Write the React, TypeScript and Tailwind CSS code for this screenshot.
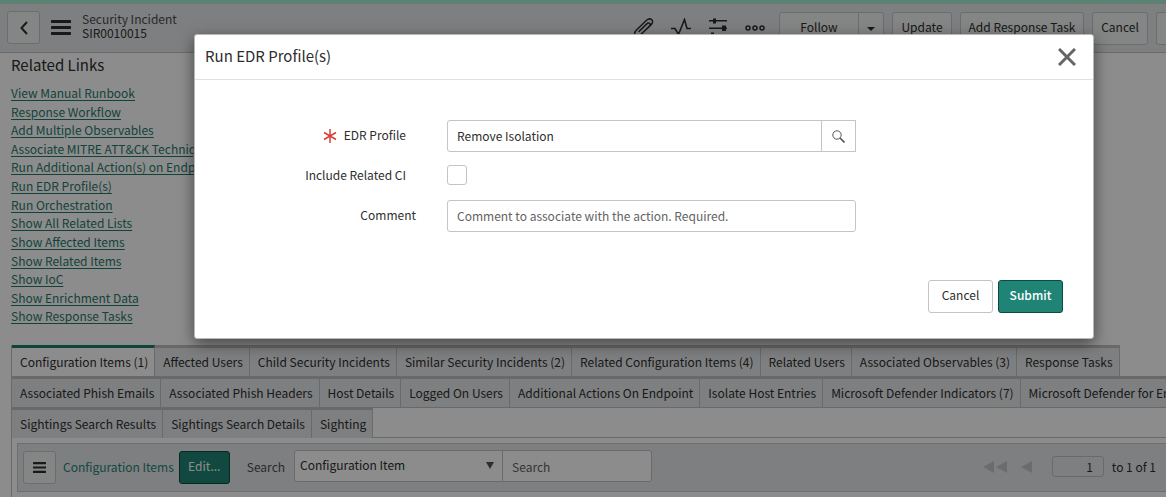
import React, { useState } from "react";

const RELATED_LINKS = [
  "View Manual Runbook",
  "Response Workflow",
  "Add Multiple Observables",
  "Associate MITRE ATT&CK Technique",
  "Run Additional Action(s) on Endpoint",
  "Run EDR Profile(s)",
  "Run Orchestration",
  "Show All Related Lists",
  "Show Affected Items",
  "Show Related Items",
  "Show IoC",
  "Show Enrichment Data",
  "Show Response Tasks",
];

const TAB_ROWS = [
  [
    "Configuration Items (1)",
    "Affected Users",
    "Child Security Incidents",
    "Similar Security Incidents (2)",
    "Related Configuration Items (4)",
    "Related Users",
    "Associated Observables (3)",
    "Response Tasks",
  ],
  [
    "Associated Phish Emails",
    "Associated Phish Headers",
    "Host Details",
    "Logged On Users",
    "Additional Actions On Endpoint",
    "Isolate Host Entries",
    "Microsoft Defender Indicators (7)",
    "Microsoft Defender for Endpoint",
  ],
  ["Sightings Search Results", "Sightings Search Details", "Sighting"],
];

interface HeaderButtonProps {
  className?: string;
  label?: string;
  children?: React.ReactNode;
}

const HeaderButton: React.FC<HeaderButtonProps> = ({ className = "", label, children }) => (
  <button
    aria-label={label}
    className={`h-[33px] border border-[#c4c6c8] bg-[#f0f2f2] pb-[3px] text-[#2e2e2e] ${className}`}
  >
    {children}
  </button>
);

/**
 * Record header with the form actions
 */
const FormHeader: React.FC = () => (
  <header className="flex h-[49px] items-start overflow-hidden border-b border-[#c0c2c6] bg-[#e6e8ea] pl-[7px] pt-[7px]">
    <button
      aria-label="Back"
      className="flex h-[33px] w-[33px] shrink-0 items-center justify-center rounded-[3px] border border-[#c4c6c8] bg-[#f0f2f2]"
    >
      <BackIcon />
    </button>
    <button aria-label="Additional actions" className="ml-[11px] mt-[9px] shrink-0">
      <MenuIcon className="h-[15px] w-5" />
    </button>
    <div className="ml-[11px] mt-px shrink-0 leading-[14px]">
      <div className="text-[#4a4d50]">Security Incident</div>
      <div className="text-[#2e2e2e]">SIR0010015</div>
    </div>
    <div className="ml-auto mt-px flex shrink-0 items-start">
      <button aria-label="Attachments" className="mt-[6px]">
        <PaperclipIcon />
      </button>
      <button aria-label="Activity" className="ml-[17px] mt-[6px]">
        <ActivityIcon />
      </button>
      <button aria-label="Personalize form" className="ml-[17px] mt-[6px]">
        <SlidersIcon />
      </button>
      <button aria-label="More options" className="ml-[17px] mt-[13px]">
        <DotsIcon />
      </button>
      <HeaderButton className="ml-[14px] w-20 rounded-l-[3px]">Follow</HeaderButton>
      <HeaderButton
        label="Follow options"
        className="-ml-px flex w-[26px] items-center justify-center rounded-r-[3px]"
      >
        <svg className="mt-[3px] h-1 w-2" viewBox="0 0 8 4">
          <path d="M0 0h8L4 4z" fill="#2e2e2e" />
        </svg>
      </HeaderButton>
      <HeaderButton className="ml-2 w-[60px] rounded-[3px]">Update</HeaderButton>
      <HeaderButton className="ml-2 w-[124px] rounded-[3px]">Add Response Task</HeaderButton>
      <HeaderButton className="ml-2 w-14 rounded-[3px]">Cancel</HeaderButton>
      <HeaderButton label="More actions" className="ml-2 w-[10px] rounded-l-[3px] border-r-0" />
    </div>
  </header>
);

const RelatedLinks: React.FC = () => (
  <section className="px-[11px] pt-[2px]">
    <h2 className="text-[15px] leading-5 text-[#2e2e2e]">Related Links</h2>
    <ul className="mt-[9px] grid min-h-[242px] content-stretch">
      {RELATED_LINKS.map((link) => (
        <li key={link} className="leading-[18px]">
          <a href="#" className="text-[#1f7a6c] underline underline-offset-2">
            {link}
          </a>
        </li>
      ))}
    </ul>
  </section>
);

const RelatedTabs: React.FC = () => {
  const [active, setActive] = useState("Configuration Items (1)");

  return (
    <nav>
      {TAB_ROWS.map((row, rowIndex) => (
        <div key={rowIndex} className="flex overflow-hidden">
          {row.map((tab) => (
            <button
              key={tab}
              onClick={() => setActive(tab)}
              className={`h-[31px] shrink-0 whitespace-nowrap border-r border-t-[3px] border-r-[#c0c2c4] pl-2 pr-[6px] text-[#2e2e2e] ${
                tab === active
                  ? "border-t-[#1f7a6c] bg-white"
                  : "border-t-[#c0c0c0] bg-[#e6e8ea]"
              }`}
            >
              {tab}
            </button>
          ))}
          {rowIndex === TAB_ROWS.length - 1 && (
            <div className="flex-1 border-y border-[#c0c0c0]" />
          )}
        </div>
      ))}
    </nav>
  );
};

const ListToolbar: React.FC = () => (
  <div className="ml-[5px] mt-[5px] flex h-[49px] items-center border border-r-0 border-[#c8cacc] bg-[#e6e8ea] pl-[5px] pr-[10px]">
    <button
      aria-label="List controls"
      className="flex h-[33px] w-[33px] shrink-0 items-center justify-center rounded-[3px] border border-[#c4c6c8] bg-[#f0f2f2]"
    >
      <MenuIcon className="h-[11px] w-[13px]" />
    </button>
    <a href="#" className="ml-[7px] pb-[2px] text-[#1f8476]">
      Configuration Items
    </a>
    <button className="ml-[5px] h-[33px] w-[51px] rounded-[3px] border border-[#0f4a42] bg-[#1f8476] pb-[3px] text-white">
      Edit...
    </button>
    <label htmlFor="list-search" className="ml-[17px] pb-[2px] text-[#4a4d50]">
      Search
    </label>
    <div className="relative -mt-[3px] ml-[9px]">
      <select
        aria-label="Search field"
        className="h-8 w-[209px] appearance-none rounded-l-[3px] border border-[#c0c2c4] bg-white pb-[2px] pl-[5px] text-[#2e2e2e]"
      >
        <option>Configuration Item</option>
      </select>
      <svg className="pointer-events-none absolute right-[9px] top-3 h-[7px] w-2" viewBox="0 0 8 7">
        <path d="M0 0h8L4 7z" fill="#555" />
      </svg>
    </div>
    <input
      id="list-search"
      placeholder="Search"
      className="-ml-px -mt-[3px] h-8 w-[150px] rounded-r-[3px] border border-[#c0c2c4] bg-white px-[9px] placeholder:text-[#5f6366]"
    />
    <div className="-mt-[2px] ml-auto flex items-center">
      <button aria-label="First page">
        <svg className="h-3 w-6" viewBox="0 0 24 12" fill="#c4c6c6">
          <path d="M11 0v12L0 6zM24 0v12L13 6z" />
        </svg>
      </button>
      <button aria-label="Previous page" className="ml-[14px]">
        <svg className="h-3 w-[11px]" viewBox="0 0 11 12" fill="#c4c6c6">
          <path d="M11 0v12L0 6z" />
        </svg>
      </button>
      <input
        aria-label="Page row"
        defaultValue="1"
        className="ml-5 h-[21px] w-[52px] rounded-[3px] border border-[#c0c2c4] bg-transparent px-[10px] text-right text-[#2e2e2e]"
      />
      <span className="ml-2 whitespace-nowrap text-[#2e2e2e]">to 1 of 1</span>
    </div>
  </div>
);

/**
 * Dialog for running an EDR profile on the incident
 */
const EdrProfileDialog: React.FC = () => {
  const [profile, setProfile] = useState("Remove Isolation");
  const [includeRelated, setIncludeRelated] = useState(false);
  const [comment, setComment] = useState("");

  return (
    <div
      role="dialog"
      aria-labelledby="edr-title"
      className="min-w-0 flex-1 rounded-[3px] border border-[#b8b8b8] bg-white text-[#2e2e2e] shadow-[0_5px_15px_rgba(0,0,0,0.5)]"
    >
      <div className="flex h-[45px] items-center justify-between border-b border-[#e0e0e0] pl-[10px] pr-[17px]">
        <h1 id="edr-title" className="pb-[2px] text-[15px]">
          Run EDR Profile(s)
        </h1>
        <button aria-label="Close">
          <svg className="h-[18px] w-[18px]" viewBox="0 0 18 18" stroke="#666" strokeWidth="3">
            <path d="M1 1l16 16M17 1L1 17" />
          </svg>
        </button>
      </div>
      <form className="pb-[25px] pr-[30px] pt-10" onSubmit={(e) => e.preventDefault()}>
        <div className="flex h-8 items-center">
          <label
            htmlFor="edr-profile"
            className="flex w-[211px] items-center justify-end gap-[7px] pb-[2px]"
          >
            <RequiredIcon />
            EDR Profile
          </label>
          <div className="ml-[41px] flex w-[409px]">
            <input
              id="edr-profile"
              value={profile}
              onChange={(e) => setProfile(e.target.value)}
              className="h-8 min-w-0 flex-1 rounded-l-[3px] border border-[#c4c4c4] px-[9px] pb-[2px]"
            />
            <button
              aria-label="Look up profile"
              className="-ml-px flex h-8 w-[35px] items-center justify-center border border-[#c4c4c4]"
            >
              <SearchIcon />
            </button>
          </div>
        </div>
        <div className="mt-2 flex h-[30px] items-center">
          <label htmlFor="include-ci" className="w-[211px] text-right">
            Include Related CI
          </label>
          <input
            id="include-ci"
            type="checkbox"
            checked={includeRelated}
            onChange={(e) => setIncludeRelated(e.target.checked)}
            className="ml-[41px] h-5 w-5 appearance-none rounded-[3px] border border-[#c4c4c4] checked:bg-[#1f8476]"
          />
        </div>
        <div className="mt-[10px] flex h-8 items-center">
          <label htmlFor="comment" className="w-[221px] pb-[2px] text-right">
            Comment
          </label>
          <input
            id="comment"
            value={comment}
            onChange={(e) => setComment(e.target.value)}
            placeholder="Comment to associate with the action. Required."
            className="ml-[31px] h-8 w-[409px] rounded-[3px] border border-[#c4c4c4] px-[9px] pb-[2px] placeholder:text-[#636363]"
          />
        </div>
        <div className="mt-12 flex justify-end gap-[5px]">
          <button type="button" className="h-[33px] w-[65px] rounded-[3px] border border-[#c4c4c4] pb-[3px]">
            Cancel
          </button>
          <button
            type="submit"
            className="h-[33px] w-[65px] rounded-[3px] border border-[#0f4a42] bg-[#1f8476] pb-[3px] font-medium text-white"
          >
            Submit
          </button>
        </div>
      </form>
    </div>
  );
};

export default function App() {
  return (
    <div className="relative min-h-screen overflow-hidden bg-white font-['Noto_Sans_CJK_SC',sans-serif] text-[12px]">
      <div className="h-1 bg-[#a8ecd0]" />
      <FormHeader />
      <RelatedLinks />
      <main className="ml-[11px] mt-[19px] h-[152px] border-l border-[#c0c0c0]">
        <RelatedTabs />
        <ListToolbar />
      </main>
      <div className="absolute inset-0 flex items-start bg-black/45 pl-[194px] pr-[72px] pt-[34px]">
        <EdrProfileDialog />
      </div>
    </div>
  );
}

const BackIcon = () => (
  <svg className="h-[14px] w-2" viewBox="0 0 8 14" fill="none" stroke="#2e2e2e" strokeWidth="2">
    <path d="M7 1L1.500 7 7 13" />
  </svg>
);

const MenuIcon = ({ className }: { className: string }) => (
  <svg className={className} viewBox="0 0 20 15" preserveAspectRatio="none" fill="#2e2e2e">
    <path d="M1 0h18a1 1 0 0 1 0 3H1a1 1 0 0 1 0-3zM1 6h18a1 1 0 0 1 0 3H1a1 1 0 0 1 0-3zM1 12h18a1 1 0 0 1 0 3H1a1 1 0 0 1 0-3z" />
  </svg>
);

const PaperclipIcon = () => (
  <svg className="h-5 w-5" viewBox="0 0 20 20" fill="none" stroke="#2e2e2e" strokeWidth="1.5" strokeLinecap="round">
    <path d="M5 18L16.5 7.5C18 6 19.5 4 18 2C16 0 14 1 12.500 2.300L2.500 12C0.500 14 0 16 1.500 18C3 19.500 5 18.500 6.500 17L15 8.500C16 7.500 16.500 6.500 15.800 5.500C15 4.600 13.700 5 12.800 5.900L5 13.500" />
  </svg>
);

const ActivityIcon = () => (
  <svg className="h-5 w-5" viewBox="0 0 20 20" fill="none" stroke="#2e2e2e" strokeWidth="1.600">
    <path d="M0 10.500H4L7.500 16.500L13.500 1.500L16 10.500H20" />
  </svg>
);

const SlidersIcon = () => (
  <svg className="h-5 w-5" viewBox="0 0 20 20" fill="#2e2e2e">
    <path d="M1 2h4V0.500h3V2h11v1.500H8V5.500H5V3.500H1zM1 9.500h13V7.500h4V9.500h1V11h-1v2h-4v-2H1zM1 16.500h2V14.500h3v2h13V18H6v2H3v-2H1z" />
  </svg>
);

const DotsIcon = () => (
  <svg className="h-[6px] w-5" viewBox="0 0 20 6" fill="none" stroke="#2e2e2e" strokeWidth="1.500">
    <circle cx="3" cy="3" r="2" />
    <circle cx="10" cy="3" r="2" />
    <circle cx="17" cy="3" r="2" />
  </svg>
);

const RequiredIcon = () => (
  <svg className="mt-[2px] h-[14px] w-[14px]" viewBox="0 0 14 14" stroke="#d6403a" strokeWidth="1.500">
    <path d="M7 0v14M1 3.500l12 7M13 3.500l-12 7" />
  </svg>
);

const SearchIcon = () => (
  <svg className="h-[13px] w-[13px]" viewBox="0 0 13 13" fill="none" stroke="#555">
    <circle cx="5" cy="5" r="4.200" />
    <path d="M8 8l4.500 4.500" strokeWidth="1.600" />
  </svg>
);
